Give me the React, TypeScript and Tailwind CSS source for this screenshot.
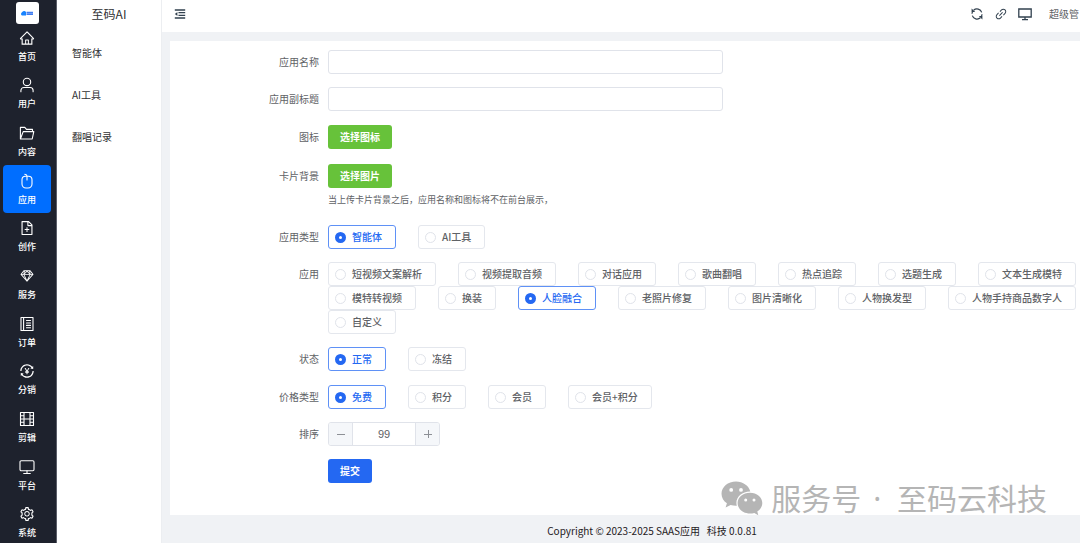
import { useState } from "react";
import type { ReactNode } from "react";
import {
  AiOutlineFileAdd,
  AiOutlineHome,
  AiOutlineLink,
  AiOutlineSetting,
  AiOutlineSketch,
  AiOutlineTransaction,
} from "react-icons/ai";

function Stroke({ children }: { children: ReactNode }) {
  return (
    <svg
      viewBox="0 0 16 16"
      className="size-4"
      fill="none"
      stroke="currentColor"
      strokeWidth="1.1"
      strokeLinecap="round"
      strokeLinejoin="round"
      aria-hidden="true"
    >
      {children}
    </svg>
  );
}

const UserIcon = () => (
  <Stroke>
    <circle cx="8" cy="4.900" r="3.700" />
    <path d="M1.900 14.800v-1.300a3 3 0 0 1 3-3h6.200a3 3 0 0 1 3 3v1.300" />
  </Stroke>
);

const FolderIcon = () => (
  <Stroke>
    <path d="M1.400 14V2.400h4.400l1.700 2h6v2.200M1.400 14h11.800l1.600-7.400H4.200L1.400 14" />
  </Stroke>
);

const MouseIcon = () => (
  <Stroke>
    <path d="M6.500 3.300h3a3.500 3.500 0 0 1 3.500 3.500v4.200a4 4 0 0 1-4 4H7a4 4 0 0 1-4-4V6.800a3.500 3.500 0 0 1 3.500-3.500z" />
    <path d="M8 7V3.200C8 1.800 7.200 1.500 5.800 1.300" />
  </Stroke>
);

const NotebookIcon = () => (
  <Stroke>
    <path d="M2 1.500h12v13H2zM4.600 1.500v13M7.500 4.500h4M7.500 7h4M7.500 9.400h4M7.500 11.800h4" />
  </Stroke>
);

const FilmIcon = () => (
  <Stroke>
    <path d="M1.500 1.500h13v13h-13zM5 1.500v13M11 1.500v13M5 8h6M1.500 4.700H5M1.500 8H5M1.500 11.300H5M11 4.700h3.500M11 8h3.500M11 11.300h3.500" />
  </Stroke>
);

const MonitorIcon = () => (
  <Stroke>
    <rect x="1" y="1.800" width="14" height="10" rx="1.200" />
    <path d="M8 11.800v2.700M4.700 14.500h6.600" />
  </Stroke>
);

const FoldIcon = () => (
  <svg viewBox="0 0 12 12" className="size-3" fill="none" stroke="currentColor" strokeWidth="1.300" aria-hidden="true">
    <path d="M.8 2h10.400M4.500 4.700h6.700M4.500 7.300h6.700M.8 10h10.400" />
    <path d="M.8 6l2.600-2v4z" fill="currentColor" stroke="none" />
  </svg>
);

const ScreenIcon = () => (
  <svg viewBox="0 0 14 14" className="size-3.5" fill="none" stroke="currentColor" strokeWidth="1.3" aria-hidden="true">
    <path d="M.8 2h12.400v8H.8zM7 10v2.400M4 12.600h6" />
  </svg>
);

const RefreshIcon = () => (
  <svg viewBox="0 0 14 14" className="size-3.5" fill="none" stroke="currentColor" strokeWidth="1.200" aria-hidden="true">
    <path d="M3.600 3.200A5 5 0 0 1 11.700 5.400M12 7.200a5 5 0 0 1-.6 2M10.400 10.800A5 5 0 0 1 2.300 8.600M2 6.800a5 5 0 0 1 .600-2" />
    <path d="M1.600 1.500v3.600h3.600zM12.400 12.500V8.900H8.800z" fill="currentColor" stroke="none" />
  </svg>
);

const WechatIcon = () => (
  <svg viewBox="0 0 42 35" className="h-[35px] w-[42px]" fill="currentColor" aria-hidden="true">
    <path
      fillRule="evenodd"
      d="M15 .5C6.900.5.500 6 .500 12.800c0 3.900 2.100 7.300 5.400 9.500L4.600 26.500l5-2.600c1.700.500 3.500.800 5.400.800h.8a10.500 10.500 0 0 1-.4-2.900c0-6.300 6-11.300 13.300-11.300h.6C28 4.900 22 .5 15 .5zM10.200 7a1.900 1.900 0 1 1 0 3.800 1.900 1.900 0 0 1 0-3.800zm9.800 0a1.900 1.900 0 1 1 0 3.800A1.900 1.900 0 0 1 20 7z"
    />
    <path
      fillRule="evenodd"
      d="M29 11.700c-6.900 0-12.400 4.600-12.400 10.400S22.100 32.500 29 32.500c1.500 0 3-.200 4.300-.6l4 2.400-1-3.700c2.900-1.900 5-5 5-8.500 0-5.800-5.400-10.400-12.300-10.400zm-4.300 5.700a1.500 1.500 0 1 1 0 3 1.500 1.500 0 0 1 0-3zm8.300 0a1.500 1.500 0 1 1 0 3 1.500 1.500 0 0 1 0-3z"
    />
  </svg>
);

const navItems: { label: string; icon: ReactNode }[] = [
  { label: "首页", icon: <AiOutlineHome className="size-4" /> },
  { label: "用户", icon: <UserIcon /> },
  { label: "内容", icon: <FolderIcon /> },
  { label: "应用", icon: <MouseIcon /> },
  { label: "创作", icon: <AiOutlineFileAdd className="size-4" /> },
  { label: "服务", icon: <AiOutlineSketch className="size-4" /> },
  { label: "订单", icon: <NotebookIcon /> },
  { label: "分销", icon: <AiOutlineTransaction className="size-4" /> },
  { label: "剪辑", icon: <FilmIcon /> },
  { label: "平台", icon: <MonitorIcon /> },
  { label: "系统", icon: <AiOutlineSetting className="size-4" /> },
];

const apps = [
  "短视频文案解析",
  "视频提取音频",
  "对话应用",
  "歌曲翻唱",
  "热点追踪",
  "选题生成",
  "文本生成模特",
  "模特转视频",
  "换装",
  "人脸融合",
  "老照片修复",
  "图片清晰化",
  "人物换发型",
  "人物手持商品数字人",
  "自定义",
];

function Row({ label, htmlFor, children }: { label: string; htmlFor?: string; children: ReactNode }) {
  const cls = "h-6 w-[158px] shrink-0 pr-[9px] text-right leading-6 text-[#606266]";
  return (
    <div className="flex items-start">
      {htmlFor ? (
        <label htmlFor={htmlFor} className={cls}>
          {label}
        </label>
      ) : (
        <span className={cls}>{label}</span>
      )}
      <div className="min-w-0 flex-1">{children}</div>
    </div>
  );
}

function RadioRow({ label, name, options, initial }: { label: string; name: string; options: string[]; initial: string }) {
  const [value, setValue] = useState(initial);
  return (
    <Row label={label}>
      <div role="radiogroup" aria-label={label} className="flex flex-wrap gap-x-[22px]">
        {options.map((option) => (
          <label
            key={option}
            className="flex h-6 items-center gap-1.5 rounded-[3px] border border-[#e4e7ed] pr-[13px] pl-1.5 font-medium whitespace-nowrap text-[#606266] has-checked:border-[#5f91f6] has-checked:text-[#2468f2]"
          >
            <input
              type="radio"
              name={name}
              checked={value === option}
              onChange={() => setValue(option)}
              className="size-[11px] appearance-none rounded-full border border-[#e0e3ea] bg-white checked:border-4 checked:border-[#2468f2]"
            />
            {option}
          </label>
        ))}
      </div>
    </Row>
  );
}

const inputClass = "block h-6 w-full max-w-[395px] rounded-[3px] border border-[#e0e3ea] bg-white px-2 outline-none";
const greenButton = "block h-6 rounded-[3px] bg-[#67c23a] px-3 font-bold text-white";

export default function App() {
  const [order, setOrder] = useState(99);

  return (
    <div className="flex h-screen overflow-hidden bg-[#f0f2f5] font-['Noto_Sans_CJK_SC',sans-serif] text-[10px] leading-4">
      <aside className="flex w-[57px] shrink-0 flex-col border-r border-[#5a5d68] bg-[#1e222d] pr-[5px] pl-[3px] text-white">
        <div className="mt-0.5 flex h-[22px] w-[23px] shrink-0 items-center justify-center self-center rounded-[3px] bg-white">
          <svg viewBox="0 0 14 6" className="h-1.5 w-3.5" aria-hidden="true">
            <path d="M2 5.500a1.800 1.800 0 0 1 0-3.200A2.300 2.300 0 0 1 6 2v3.500z" fill="#1683ff" />
            <path d="M6.500 2.500h6.500M6.500 4.300h6.500" stroke="#3f7df2" strokeWidth="1.500" />
          </svg>
        </div>
        <nav className="-mt-0.5 -mb-[3px] flex min-h-0 flex-1 flex-col">
          {navItems.map((item) => (
            <a
              key={item.label}
              href="#"
              aria-current={item.label === "应用" ? "page" : undefined}
              className="flex min-h-0 flex-1 flex-col items-center justify-center gap-1 rounded pt-0.5 text-[9px] leading-3.5 font-medium aria-[current=page]:bg-[#006eff]"
            >
              {item.icon}
              {item.label}
            </a>
          ))}
        </nav>
      </aside>

      <aside className="w-[105px] shrink-0 border-r border-[#eceef1] bg-white">
        <h1 className="pt-1 text-center text-xs leading-5 text-[#303133]">至码AI</h1>
        <nav className="mt-2 flex flex-col text-[#303133]">
          {["智能体", "AI工具", "翻唱记录"].map((item) => (
            <a key={item} href="#" className="block h-[42px] pl-[15px] leading-[42px]">
              {item}
            </a>
          ))}
        </nav>
      </aside>

      <div className="flex min-w-0 flex-1 flex-col">
        <header className="flex h-8 shrink-0 items-center bg-white pb-1 pl-3 text-[#32414f]">
          <button type="button" aria-label="折叠菜单">
            <FoldIcon />
          </button>
          <div className="ml-auto flex items-center gap-2.5 pr-px">
            <button type="button" aria-label="刷新">
              <RefreshIcon />
            </button>
            <button type="button" aria-label="链接">
              <AiOutlineLink className="size-3.5" />
            </button>
            <button type="button" aria-label="大屏">
              <ScreenIcon />
            </button>
            <a href="#" className="ml-[7px] text-[#606266]">
              超级管
            </a>
          </div>
        </header>

        <main className="relative mt-[9px] ml-2 flex-1 bg-white pt-[9px]">
          <form className="flex flex-col gap-[13px]" onSubmit={(e) => e.preventDefault()}>
            <Row label="应用名称" htmlFor="name">
              <input id="name" type="text" className={inputClass} />
            </Row>
            <Row label="应用副标题" htmlFor="subtitle">
              <input id="subtitle" type="text" className={inputClass} />
            </Row>
            <div className="py-px">
              <Row label="图标">
                <button type="button" className={greenButton}>
                  选择图标
                </button>
              </Row>
            </div>
            <div className="pt-px">
              <Row label="卡片背景">
                <button type="button" className={greenButton}>
                  选择图片
                </button>
                <p className="h-6 text-[9px] leading-6 text-[#606266]">
                  当上传卡片背景之后，应用名称和图标将不在前台展示，
                </p>
              </Row>
            </div>
            <RadioRow label="应用类型" name="type" options={["智能体", "AI工具"]} initial="智能体" />
            <RadioRow label="应用" name="app" options={apps} initial="人脸融合" />
            <RadioRow label="状态" name="status" options={["正常", "冻结"]} initial="正常" />
            <div className="pt-px">
              <RadioRow label="价格类型" name="price" options={["免费", "积分", "会员", "会员+积分"]} initial="免费" />
            </div>
            <Row label="排序" htmlFor="order">
              <div className="flex h-6 w-28 overflow-hidden rounded-[3px] border border-[#e0e3ea] text-[#606266]">
                <button
                  type="button"
                  aria-label="减少"
                  onClick={() => setOrder(order - 1)}
                  className="flex w-6 shrink-0 items-center justify-center border-r border-[#e0e3ea] bg-[#f5f7fa] text-[#8d9096]"
                >
                  <svg viewBox="0 0 10 10" className="size-2.5" stroke="currentColor" aria-hidden="true">
                    <path d="M1 5.500h8" />
                  </svg>
                </button>
                <input
                  id="order"
                  type="text"
                  inputMode="numeric"
                  value={order}
                  onChange={(e) => setOrder(Number(e.target.value) || 0)}
                  className="min-w-0 flex-1 text-center font-['Liberation_Sans',sans-serif] text-[11px] outline-none"
                />
                <button
                  type="button"
                  aria-label="增加"
                  onClick={() => setOrder(order + 1)}
                  className="flex w-6 shrink-0 items-center justify-center border-l border-[#e0e3ea] bg-[#f5f7fa] text-[#8d9096]"
                >
                  <svg viewBox="0 0 10 10" className="size-2.5" stroke="currentColor" aria-hidden="true">
                    <path d="M1 5.500h8M5.500 1v8" />
                  </svg>
                </button>
              </div>
            </Row>
            <div className="pl-[158px]">
              <button type="submit" className="block h-6 rounded-[3px] bg-[#2468f2] px-3 font-bold text-white">
                提交
              </button>
            </div>
          </form>
          <div className="absolute right-[33px] -bottom-1 flex items-center gap-2 text-[30px] leading-10 whitespace-nowrap text-[#b5b5b5]">
            <WechatIcon />
            <span>
              服务号<span className="mr-2 ml-1 font-['Noto_Sans',sans-serif]"> · </span>至码云科技
            </span>
          </div>
        </main>

        <footer className="h-7 shrink-0 pt-2 pl-[62px] text-center text-[#1f2023]">
          Copyright © 2023-2025 SAAS应用 &nbsp; 科技 0.0.81
        </footer>
      </div>
    </div>
  );
}
